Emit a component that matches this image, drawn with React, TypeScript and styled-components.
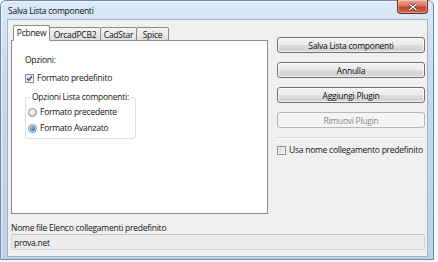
import React from "react";
import styled, { createGlobalStyle } from "styled-components";

const GlobalStyle = createGlobalStyle`
  html, body {
    margin: 0;
    padding: 0;
  }
  body {
    width: 438px;
    height: 262px;
    overflow: hidden;
    background: #f6f7f7;
    font-family: "Open Sans", "Noto Sans", sans-serif;
    font-size: 8.5px;
    letter-spacing: -0.25px;
    color: #161616;
  }
`;

const Desktop = styled.div`
  width: 438px;
  height: 262px;
`;

const Window = styled.div`
  width: 434px;
  height: 260px;
  box-sizing: border-box;
  display: flex;
  flex-direction: column;
  padding: 0 5px 2px 6px;
  border: 1px solid #6f89a6;
  border-radius: 6px 6px 0 0;
  background: linear-gradient(180deg, #dbe9f7 0%, #c6dbf0 30%, #bad2ea 100%);
  box-shadow: inset 1px 1px 0 rgba(255, 255, 255, 0.6);
`;

const TitleBar = styled.div`
  height: 18px;
  display: flex;
  align-items: flex-start;
  justify-content: space-between;
`;

const Title = styled.span`
  padding: 4px 0 0 1px;
  color: #111;
`;

const CloseButton = styled.div`
  width: 31px;
  height: 14px;
  margin-top: -1px;
  box-sizing: border-box;
  display: flex;
  align-items: center;
  justify-content: center;
  border: 1px solid #6c2a1f;
  border-top: none;
  border-radius: 0 0 4px 4px;
  background: linear-gradient(180deg, #e9a99b 0%, #d7735e 45%, #c2432b 55%, #cf6a4f 100%);
  box-shadow: inset 0 0 0 1px rgba(255, 255, 255, 0.35);
`;

const Client = styled.div`
  flex: 1;
  display: flex;
  flex-direction: column;
  background: #f0f0f0;
  border: 1px solid #9fb3c9;
`;

const TopRow = styled.div`
  height: 194px;
  box-sizing: border-box;
  display: flex;
  gap: 9px;
  padding: 5px 2px 0 3px;
`;

const Notebook = styled.div`
  width: 257px;
  display: flex;
  flex-direction: column;
`;

const TabStrip = styled.div`
  display: flex;
  align-items: flex-end;
  padding-left: 2px;
  margin-bottom: -1px;
  position: relative;
  z-index: 1;
`;

const Tab = styled.div<{ $active?: boolean; $w: number }>`
  width: ${(p) => p.$w}px;
  height: ${(p) => (p.$active ? 16 : 14)}px;
  box-sizing: border-box;
  display: flex;
  align-items: center;
  justify-content: center;
  padding-bottom: ${(p) => (p.$active ? 1 : 0)}px;
  margin-right: -1px;
  border: 1px solid #898c95;
  border-bottom: ${(p) => (p.$active ? "1px solid #fff" : "1px solid #898c95")};
  border-radius: 2px 2px 0 0;
  background: ${(p) =>
    p.$active ? "#fff" : "linear-gradient(180deg, #f3f3f3 0%, #ebebeb 50%, #dcdcdc 100%)"};
  color: #111;
  z-index: ${(p) => (p.$active ? 2 : 1)};
`;

const Panel = styled.div`
  flex: 1;
  background: #fff;
  border: 1px solid #898c95;
  padding: 13px 13px 0;
  display: flex;
  flex-direction: column;
  align-items: flex-start;
`;

const Text = styled.div`
  line-height: 12px;
  white-space: nowrap;
`;

const CheckRow = styled.label<{ $top?: number }>`
  display: flex;
  align-items: center;
  gap: 3px;
  line-height: 12px;
  white-space: nowrap;
  margin-top: ${(p) => p.$top ?? 0}px;
`;

const Group = styled.fieldset`
  margin: 8px 0 0;
  width: 111px;
  box-sizing: border-box;
  padding: 4px 2px 4px;
  border: 1px solid #d5dfe5;
  border-radius: 3px;
  display: flex;
  flex-direction: column;
  gap: 4px;
`;

const Legend = styled.legend`
  padding: 0 1px;
  margin-left: 3px;
  line-height: 10px;
  white-space: nowrap;
`;

const SideColumn = styled.div`
  flex: 1;
  display: flex;
  flex-direction: column;
  padding-top: 12px;
`;

const Button = styled.div<{ $disabled?: boolean }>`
  height: 16px;
  box-sizing: border-box;
  margin-bottom: 9px;
  display: flex;
  align-items: center;
  justify-content: center;
  border: 1px solid ${(p) => (p.$disabled ? "#b6babd" : "#707070")};
  border-radius: 3px;
  background: ${(p) =>
    p.$disabled
      ? "#f4f4f4"
      : "linear-gradient(180deg, #f2f2f2 0%, #ebebeb 48%, #dddddd 52%, #cfcfcf 100%)"};
  box-shadow: ${(p) => (p.$disabled ? "none" : "inset 0 0 0 1px rgba(255,255,255,0.7)")};
  color: ${(p) => (p.$disabled ? "#8b8b8b" : "#111")};
`;

const Separator = styled.div`
  height: 1px;
  margin: 0 0 5px;
  background: #d5d5d5;
  border-bottom: 1px solid #fff;
`;

const Bottom = styled.div`
  flex: 1;
  display: flex;
  flex-direction: column;
  padding: 8px 2px 0 3px;
`;

const ReadOnlyField = styled.div`
  height: 16px;
  box-sizing: border-box;
  display: flex;
  align-items: center;
  padding-left: 2px;
  border: 1px solid #d0d0d0;
  border-top-color: #c4c4c4;
  border-radius: 2px;
  background: #ececec;
`;

function CheckBox({ checked }: { checked?: boolean }) {
  return (
    <svg width="9" height="9" viewBox="0 0 9 9">
      <defs>
        <linearGradient id="cbg" x1="0" y1="0" x2="1" y2="1">
          <stop offset="0" stopColor="#d0d3d8" />
          <stop offset="1" stopColor="#f7f7f7" />
        </linearGradient>
      </defs>
      <rect x="0.5" y="0.5" width="8" height="8" fill="#fff" stroke="#8e8f8f" />
      <rect x="1.5" y="1.5" width="6" height="6" fill="url(#cbg)" />
      {checked && (
        <path d="M2 4.6 L3.7 6.4 L7 2.2" fill="none" stroke="#3d4f8e" strokeWidth="1.4" />
      )}
    </svg>
  );
}

function Radio({ checked }: { checked?: boolean }) {
  return (
    <svg width="9" height="9" viewBox="0 0 9 9">
      <defs>
        <radialGradient id="rbg" cx="0.35" cy="0.35" r="0.8">
          <stop offset="0" stopColor="#f8f8f8" />
          <stop offset="1" stopColor="#c9ccd1" />
        </radialGradient>
        <radialGradient id="rdot" cx="0.4" cy="0.4" r="0.7">
          <stop offset="0" stopColor="#9fd3f3" />
          <stop offset="0.6" stopColor="#2e7bb8" />
          <stop offset="1" stopColor="#163f63" />
        </radialGradient>
      </defs>
      <circle cx="4.5" cy="4.5" r="4" fill="url(#rbg)" stroke="#8e8f8f" />
      {checked && <circle cx="4.5" cy="4.5" r="2.4" fill="url(#rdot)" />}
    </svg>
  );
}

export default function App() {
  return (
    <Desktop>
      <GlobalStyle />
      <Window>
        <TitleBar>
          <Title>Salva Lista componenti</Title>
          <CloseButton>
            <svg width="10" height="8" viewBox="0 0 10 8">
              <path d="M1.5 1 L8.5 7 M8.5 1 L1.5 7" stroke="#5a2318" strokeWidth="2.6" />
              <path d="M1.5 1 L8.5 7 M8.5 1 L1.5 7" stroke="#fff" strokeWidth="1.4" />
            </svg>
          </CloseButton>
        </TitleBar>
        <Client>
          <TopRow>
            <Notebook>
              <TabStrip>
                <Tab $active $w={37}>Pcbnew</Tab>
                <Tab $w={52}>OrcadPCB2</Tab>
                <Tab $w={37}>CadStar</Tab>
                <Tab $w={33}>Spice</Tab>
              </TabStrip>
              <Panel>
                <Text>Opzioni:</Text>
                <CheckRow $top={6}>
                  <CheckBox checked />
                  Formato predefinito
                </CheckRow>
                <Group>
                  <Legend>Opzioni Lista componenti:</Legend>
                  <CheckRow>
                    <Radio />
                    Formato precedente
                  </CheckRow>
                  <CheckRow>
                    <Radio checked />
                    Formato Avanzato
                  </CheckRow>
                </Group>
              </Panel>
            </Notebook>
            <SideColumn>
              <Button>Salva Lista componenti</Button>
              <Button>Annulla</Button>
              <Button>Aggiungi Plugin</Button>
              <Button $disabled>Rimuovi Plugin</Button>
              <Separator />
              <CheckRow>
                <CheckBox />
                Usa nome collegamento predefinito
              </CheckRow>
            </SideColumn>
          </TopRow>
          <Bottom>
            <Text>Nome file Elenco collegamenti predefinito</Text>
            <ReadOnlyField>prova.net</ReadOnlyField>
          </Bottom>
        </Client>
      </Window>
    </Desktop>
  );
}
